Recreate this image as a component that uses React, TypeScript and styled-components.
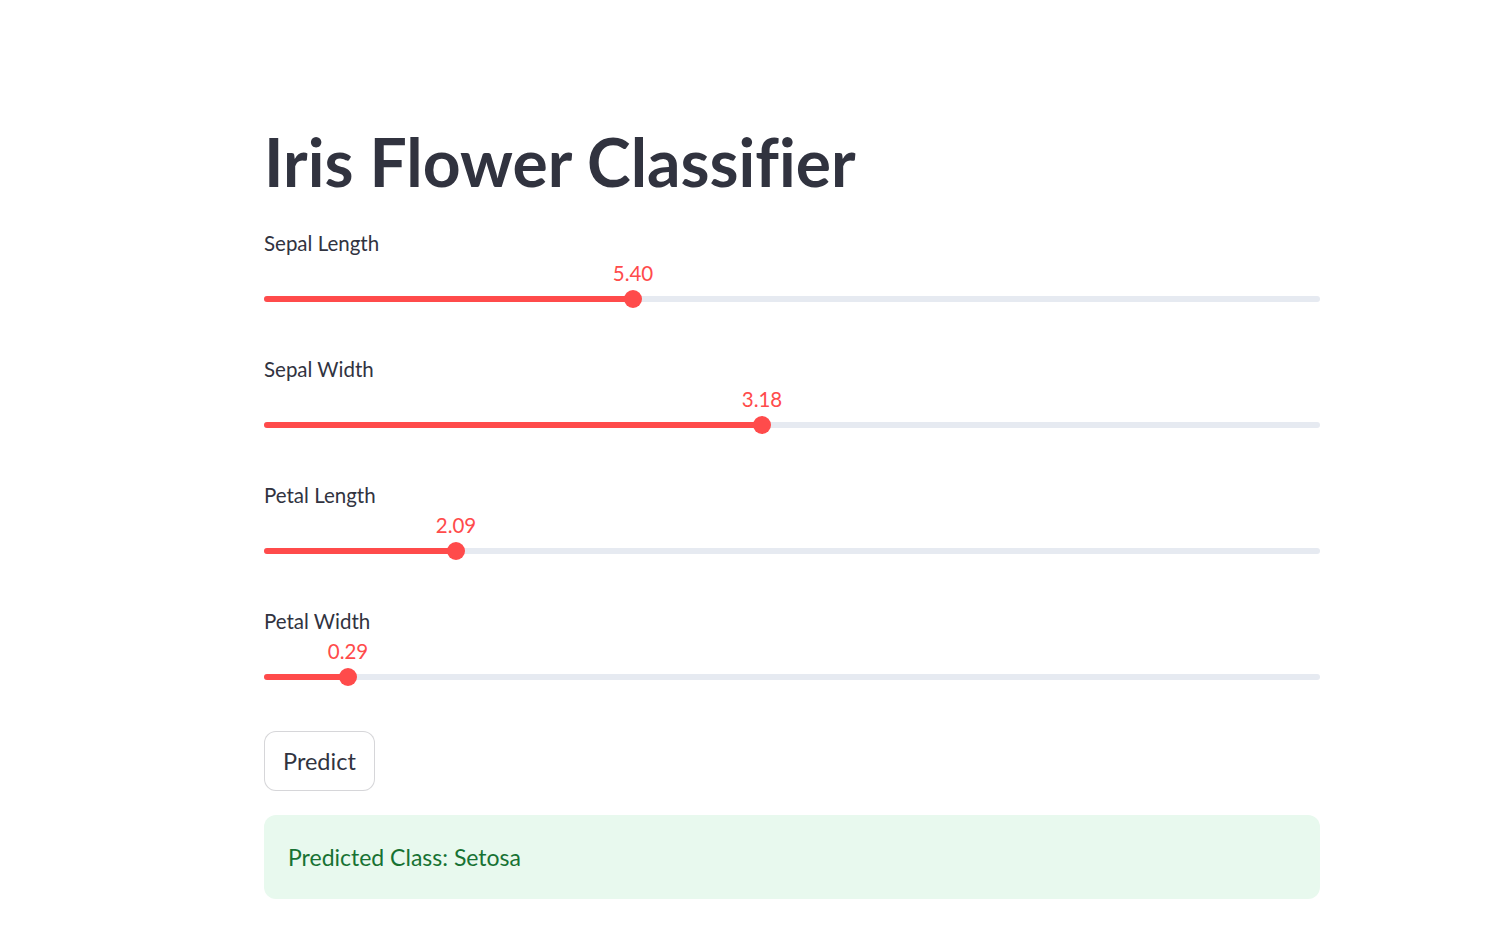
import React from "react";
import styled, { createGlobalStyle } from "styled-components";

interface Feature {
  label: string;
  value: string;
  // thumb position along the rail, 0..1
  pos: number;
}

const features: Feature[] = [
  { label: "Sepal Length", value: "5.40", pos: 369 / 1056 },
  { label: "Sepal Width", value: "3.18", pos: 498 / 1056 },
  { label: "Petal Length", value: "2.09", pos: 192 / 1056 },
  { label: "Petal Width", value: "0.29", pos: 84 / 1056 },
];

const App: React.FC = () => {
  return (
    <>
      <GlobalStyle />
      <Page>
        <Main>
          <Title>Iris Flower Classifier</Title>
          {features.map((f) => (
            <Field key={f.label}>
              <Label>{f.label}</Label>
              <Rail>
                <Filled style={{ width: `${f.pos * 100}%` }} />
                <Anchor style={{ left: `${f.pos * 100}%` }}>
                  <ValueTip>{f.value}</ValueTip>
                  <Thumb />
                </Anchor>
              </Rail>
            </Field>
          ))}
          <Button>Predict</Button>
          <Success>Predicted Class: Setosa</Success>
        </Main>
      </Page>
    </>
  );
};

const GlobalStyle = createGlobalStyle`
  body {
    margin: 0;
    background: #fff;
    font-family: Lato, "Noto Sans", sans-serif;
    font-variant-ligatures: none;
    color: #31333f;
  }
`;

const Page = styled.div`
  display: flex;
  padding: 122px 0 28px 264px;
`;

const Main = styled.div`
  width: 1056px;
  display: flex;
  flex-direction: column;
`;

const Title = styled.h1`
  margin: 0 0 26px;
  font-size: 66px;
  line-height: 79px;
  font-weight: 700;
  font-variant-ligatures: none;
  color: #31333f;
`;

const Field = styled.div`
  display: flex;
  flex-direction: column;
  padding-bottom: 51px;
`;

const Label = styled.div`
  font-size: 20.5px;
  line-height: 32px;
  color: #31333f;
  margin-bottom: 37px;
`;

const Rail = styled.div`
  position: relative;
  height: 6px;
  border-radius: 3px;
  background: #e6eaf1;
`;

const Filled = styled.div`
  height: 100%;
  border-radius: 3px;
  background: #ff4b4b;
`;

const Anchor = styled.div`
  position: absolute;
  top: 3px;
  width: 0;
  height: 0;
`;

const Thumb = styled.div`
  position: absolute;
  left: -9px;
  top: -9px;
  width: 18px;
  height: 18px;
  border-radius: 50%;
  background: #ff4b4b;
`;

const ValueTip = styled.div`
  position: absolute;
  bottom: 14px;
  left: 0;
  transform: translateX(-50%);
  font-size: 20.5px;
  line-height: 24px;
  color: #ff4b4b;
  white-space: nowrap;
`;

const Button = styled.button`
  align-self: flex-start;
  height: 60px;
  padding: 0 18px;
  border: 1px solid rgba(49, 51, 63, 0.2);
  border-radius: 12px;
  background: #fff;
  font-family: inherit;
  font-size: 23.5px;
  color: #31333f;
  cursor: pointer;
`;

const Success = styled.div`
  margin-top: 24px;
  padding: 24px;
  border-radius: 12px;
  background: #e8f9ee;
  font-size: 23px;
  line-height: 36px;
  color: #177233;
`;

export default App;
